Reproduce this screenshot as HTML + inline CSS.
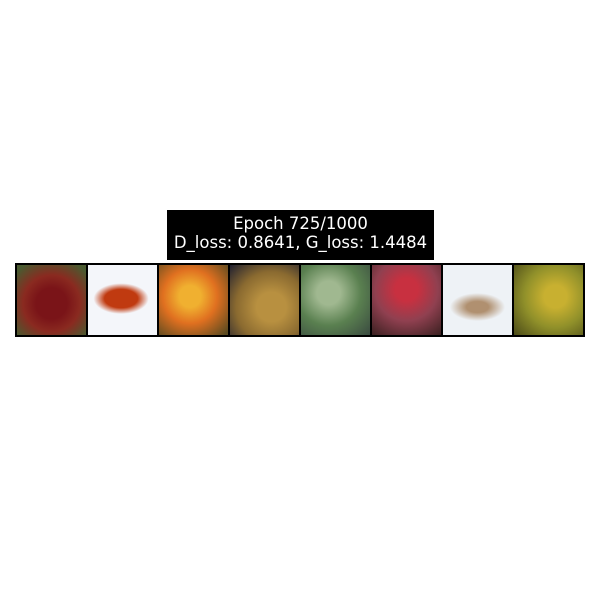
<!DOCTYPE html>
<html><head><style>
body{margin:0;width:600px;height:600px;background:#fff;position:relative;overflow:hidden;font-family:"DejaVu Sans",sans-serif}
.t{position:absolute;left:167px;top:210px;width:267px;height:50px;background:#000;color:#fff;font-size:16.5px;line-height:19px;text-align:center;padding-top:4px;box-sizing:border-box}
.s{position:absolute;left:15px;top:263px;width:570px;height:74px;background:#000;display:flex;gap:2px;padding:2px;box-sizing:border-box}
.s div{width:69px;height:70px}
</style></head><body>
<div class="t">Epoch 725/1000<br>D_loss: 0.8641, G_loss: 1.4484</div>
<div class="s">
<div style="background:radial-gradient(circle at 50% 55%,#7a1418 30%,#8a2a20 55%,#4a5a30 90%)"></div>
<div style="background:radial-gradient(ellipse 40% 22% at 48% 48%,#c03a10 60%,#f4f6fa 100%),#f6f7fb"></div>
<div style="background:radial-gradient(circle at 45% 45%,#f0b030 20%,#e07020 50%,#5a4a20 95%)"></div>
<div style="background:radial-gradient(circle at 60% 60%,#b89040 25%,#8a6a30 60%,#202030 100%)"></div>
<div style="background:radial-gradient(circle at 40% 40%,#a0b890 20%,#5a8050 55%,#3a4a40 100%)"></div>
<div style="background:radial-gradient(circle at 50% 35%,#c83040 20%,#904050 55%,#3a2020 100%)"></div>
<div style="background:radial-gradient(ellipse 40% 20% at 50% 60%,#b09070 40%,#eef2f6 100%),#f2f5f8"></div>
<div style="background:radial-gradient(circle at 60% 45%,#c8b030 20%,#90902a 55%,#4a4a18 100%)"></div>
</div>
</body></html>
